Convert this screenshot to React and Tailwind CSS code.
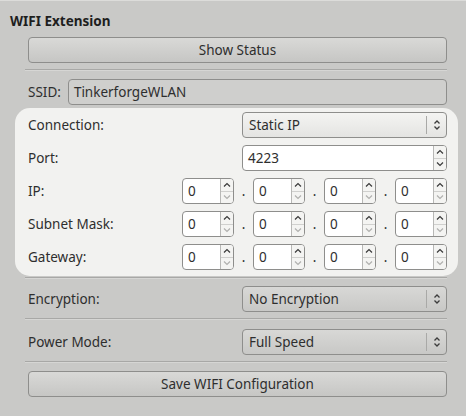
import React from 'react';

const font = { fontFamily: '"Noto Sans", "Open Sans", sans-serif' };

function Chevrons() {
  return (
    <svg width="8" height="12" viewBox="0 0 8 12" className="text-[#3c3c3c]">
      <path d="M1.5 4.5 L4 2 L6.5 4.5" fill="none" stroke="currentColor" strokeWidth="1.3" />
      <path d="M1.5 7.5 L4 10 L6.5 7.5" fill="none" stroke="currentColor" strokeWidth="1.3" />
    </svg>
  );
}

function Combo({ value, white }) {
  return (
    <div className={`flex items-center h-[26px] rounded-[4px] border border-[#8e8e8c] ${white ? 'bg-gradient-to-b from-[#f4f4f2] to-[#e4e4e2]' : 'bg-gradient-to-b from-[#d8d8d6] to-[#c8c8c6]'}`}>
      <span className="flex-1 pl-[6px] text-[13.5px] text-[#2e2e2e]">{value}</span>
      <div className="w-px h-[18px] bg-[#a9a9a7]" />
      <div className="w-[19px] flex justify-center"><Chevrons /></div>
    </div>
  );
}

function Spin({ value, wide, downOff }) {
  return (
    <div className={`flex shrink-0 h-[26px] rounded-[4px] border border-[#8e8e8c] bg-white overflow-hidden ${wide ? 'w-full' : 'w-[52px]'}`}>
      <span className="flex-1 flex items-center pl-[5px] text-[13.5px] text-[#2e2e2e]">{value}</span>
      <div className="w-[13px] flex flex-col border-l border-[#b8b8b6] bg-[#f4f4f2]">
        <div className="flex-1 flex items-center justify-center border-b border-[#d0d0ce]">
          <svg width="8" height="6" viewBox="0 0 8 6"><path d="M1 4.5 L4 1.5 L7 4.5" fill="none" stroke="#3a3a3a" strokeWidth="1.2" /></svg>
        </div>
        <div className="flex-1 flex items-center justify-center">
          <svg width="8" height="6" viewBox="0 0 8 6"><path d="M1 1.5 L4 4.5 L7 1.5" fill="none" stroke={downOff ? '#b0b0ae' : '#3a3a3a'} strokeWidth="1.2" /></svg>
        </div>
      </div>
    </div>
  );
}

const Dot = () => <span className="w-[19px] shrink-0 text-center text-[13.5px] text-[#2e2e2e]">.</span>;

function IpRow({ label }) {
  return (
    <div className="flex items-center h-[26px]">
      <span className="w-[154px] shrink-0 text-[13.5px] text-[#2e2e2e]">{label}</span>
      <Spin value="0" downOff />
      <Dot />
      <Spin value="0" downOff />
      <Dot />
      <Spin value="0" downOff />
      <Dot />
      <Spin value="0" downOff />
    </div>
  );
}

function Button({ children }) {
  return (
    <div className="h-[26px] rounded-[4px] border border-[#8e8e8c] bg-gradient-to-b from-[#d9d9d7] to-[#c6c6c4] flex items-center justify-center text-[13.5px] text-[#2e2e2e]">
      {children}
    </div>
  );
}

const Sep = () => <div className="h-px bg-[#a8a8a6] border-b border-[#d6d6d4] box-content" />;

export default function App() {
  return (
    <div style={font} className="w-[466px] h-[416px] bg-[#c9c9c7] border-t border-[#dcdcda] overflow-hidden">
      <div className="pl-[10px] pt-[11px] text-[13.5px] font-bold text-[#1e1e1e] leading-[18px]">WIFI Extension</div>
      <div className="px-[19px] pt-[7px]">
        <div className="pl-[9px]">
          <Button>Show Status</Button>
        </div>
        <div className="pl-[6px] pt-[6px] pb-[8px]"><Sep /></div>
        <div className="pl-[9px] flex items-center gap-[7px]">
          <span className="text-[13.5px] text-[#2e2e2e]">SSID:</span>
          <div className="flex-1 h-[26px] rounded-[4px] border border-[#8e8e8c] bg-[#cfcfcd] flex items-center pl-[5px] text-[13.5px] text-[#2e2e2e]">TinkerforgeWLAN</div>
        </div>
      </div>
      <div className="ml-[15px] mr-[8px] mt-[3px] rounded-[15px] bg-[#f2f2f0] pt-[4px] pb-[6px] pl-[13px] pr-[11px] flex flex-col gap-[7px]">
        <div className="flex items-center h-[26px]">
          <span className="w-[214px] shrink-0 text-[13.5px] text-[#2e2e2e]">Connection:</span>
          <div className="flex-1"><Combo value="Static IP" white /></div>
        </div>
        <div className="flex items-center h-[26px]">
          <span className="w-[214px] shrink-0 text-[13.5px] text-[#2e2e2e]">Port:</span>
          <div className="flex-1"><Spin value="4223" wide /></div>
        </div>
        <IpRow label="IP:" />
        <IpRow label="Subnet Mask:" />
        <IpRow label="Gateway:" />
      </div>
      <div className="px-[19px]">
        <div className="pl-[6px] pt-[1px] pb-[7px]"><Sep /></div>
        <div className="pl-[9px] flex items-center">
          <span className="w-[214px] shrink-0 text-[13.5px] text-[#2e2e2e]">Encryption:</span>
          <div className="flex-1"><Combo value="No Encryption" /></div>
        </div>
        <div className="pl-[6px] pt-[6px] pb-[9px]"><Sep /></div>
        <div className="pl-[9px] flex items-center">
          <span className="w-[214px] shrink-0 text-[13.5px] text-[#2e2e2e]">Power Mode:</span>
          <div className="flex-1"><Combo value="Full Speed" /></div>
        </div>
        <div className="pl-[6px] pt-[6px] pb-[8px]"><Sep /></div>
        <div className="pl-[9px]">
          <Button>Save WIFI Configuration</Button>
        </div>
      </div>
    </div>
  );
}
